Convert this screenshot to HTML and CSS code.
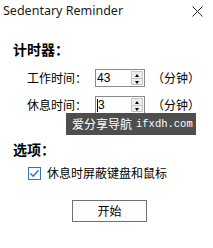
FILE: index.html
```html
<!DOCTYPE html>
<html>
<head>
<meta charset="utf-8">
<link rel="stylesheet" href="styles.css">
</head>
<body>
<div class="window">
  <div class="titlebar">
    <span class="title">Sedentary Reminder</span>
    <svg class="close" width="11" height="11" viewBox="0 0 11 11"><path d="M0.5 0.5 L10.5 10.5 M10.5 0.5 L0.5 10.5" stroke="#222" stroke-width="1" fill="none"/></svg>
  </div>
  <div class="content">
    <div class="heading">计时器：</div>
    <div class="row first">
      <span class="label">工作时间：</span>
      <div class="spin"><span class="value">43</span><div class="arrows"><span class="up"></span><span class="down"></span></div></div>
      <span class="unit">（分钟）</span>
    </div>
    <div class="row second">
      <span class="label">休息时间：</span>
      <div class="spin"><span class="value"><span class="caret"></span>3</span><div class="arrows"><span class="up"></span><span class="down"></span></div></div>
      <span class="unit">（分钟）</span>
    </div>
    <div class="heading options">选项：</div>
    <div class="check">
      <span class="box"><svg width="11" height="11" viewBox="0 0 11 11"><path d="M1.5 5.5 L4.2 8.3 L9.5 2.2" stroke="#2b6fb6" stroke-width="1.3" fill="none"/></svg></span>
      <span class="check-label">休息时屏蔽键盘和鼠标</span>
    </div>
    <div class="btn">开始</div>
  </div>
  <div class="watermark"><span class="wm-cjk">爱分享导航</span><span class="wm-url">ifxdh.com</span></div>
</div>
</body>
</html>
```
FILE: styles.css
```css
html, body {
  margin: 0;
  padding: 0;
  background: #fff;
}
.window {
  position: relative;
  width: 213px;
  height: 248px;
  background: #fff;
  overflow: hidden;
  font-family: "Noto Sans CJK SC", "Noto Sans", sans-serif;
  color: #000;
}
.titlebar {
  height: 22px;
  display: flex;
  align-items: center;
  justify-content: space-between;
  padding: 0 10px 0 3px;
}
.title {
  font-family: "Noto Sans", "Open Sans", sans-serif;
  font-size: 12.5px;
  line-height: 20px;
  color: #1a1a1a;
}
.close {
  display: block;
}
.content {
  padding-left: 13px;
}
.heading {
  margin-top: 19px;
  font-size: 14px;
  font-weight: bold;
  line-height: 16px;
}
.heading.options {
  margin-top: 27px;
}
.row {
  display: flex;
  align-items: center;
  height: 18px;
  padding-left: 14px;
  font-size: 12px;
}
.row.first { margin-top: 12px; }
.row.second { margin-top: 9px; }
.label {
  width: 68px;
  line-height: 18px;
}
.spin {
  position: relative;
  box-sizing: border-box;
  width: 50px;
  height: 18px;
  border: 1px solid #8a8a8a;
  background: #fff;
  display: flex;
  align-items: center;
  justify-content: space-between;
  padding: 0 1px;
}
.value {
  font-family: "Liberation Sans", sans-serif;
  font-size: 12px;
  line-height: 14px;
  display: flex;
  align-items: center;
}
.caret {
  display: inline-block;
  width: 1px;
  height: 13px;
  background: #000;
}
.arrows {
  width: 12px;
  height: 14px;
  display: flex;
  flex-direction: column;
  border: 1px solid #c8c8c8;
  box-sizing: border-box;
  background: #ececec;
}
.arrows span {
  flex: 1;
  position: relative;
}
.arrows .up { border-bottom: 1px solid #c8c8c8; }
.arrows .up::after,
.arrows .down::after {
  content: "";
  position: absolute;
  left: 3px;
  width: 0;
  height: 0;
  border-left: 2.5px solid transparent;
  border-right: 2.5px solid transparent;
}
.arrows .up::after {
  top: 2px;
  border-bottom: 3px solid #000;
}
.arrows .down::after {
  top: 2px;
  border-top: 3px solid #000;
}
.unit {
  margin-left: 7px;
  line-height: 18px;
}
.check {
  margin-top: 9px;
  padding-left: 15px;
  display: flex;
  align-items: center;
  height: 14px;
}
.box {
  box-sizing: border-box;
  width: 13px;
  height: 13px;
  border: 1px solid #2f74b8;
  background: #fff;
  display: flex;
  align-items: center;
  justify-content: center;
}
.box svg { display: block; }
.check-label {
  margin-left: 6px;
  font-size: 12px;
  line-height: 14px;
}
.btn {
  box-sizing: border-box;
  margin-top: 20px;
  margin-left: 59px;
  width: 75px;
  height: 22px;
  border: 1px solid #707070;
  background: #fdfdfd;
  font-size: 12px;
  line-height: 20px;
  text-align: center;
}
.watermark {
  position: absolute;
  left: 66px;
  top: 113px;
  width: 130px;
  height: 22px;
  background: #4e4e4e;
  color: #fff;
  display: flex;
  align-items: center;
  padding-left: 6px;
  box-sizing: border-box;
}
.wm-cjk {
  font-size: 12px;
  line-height: 22px;
}
.wm-url {
  margin-left: 4px;
  font-family: "Liberation Mono", monospace;
  font-size: 10.5px;
  line-height: 22px;
}
```
